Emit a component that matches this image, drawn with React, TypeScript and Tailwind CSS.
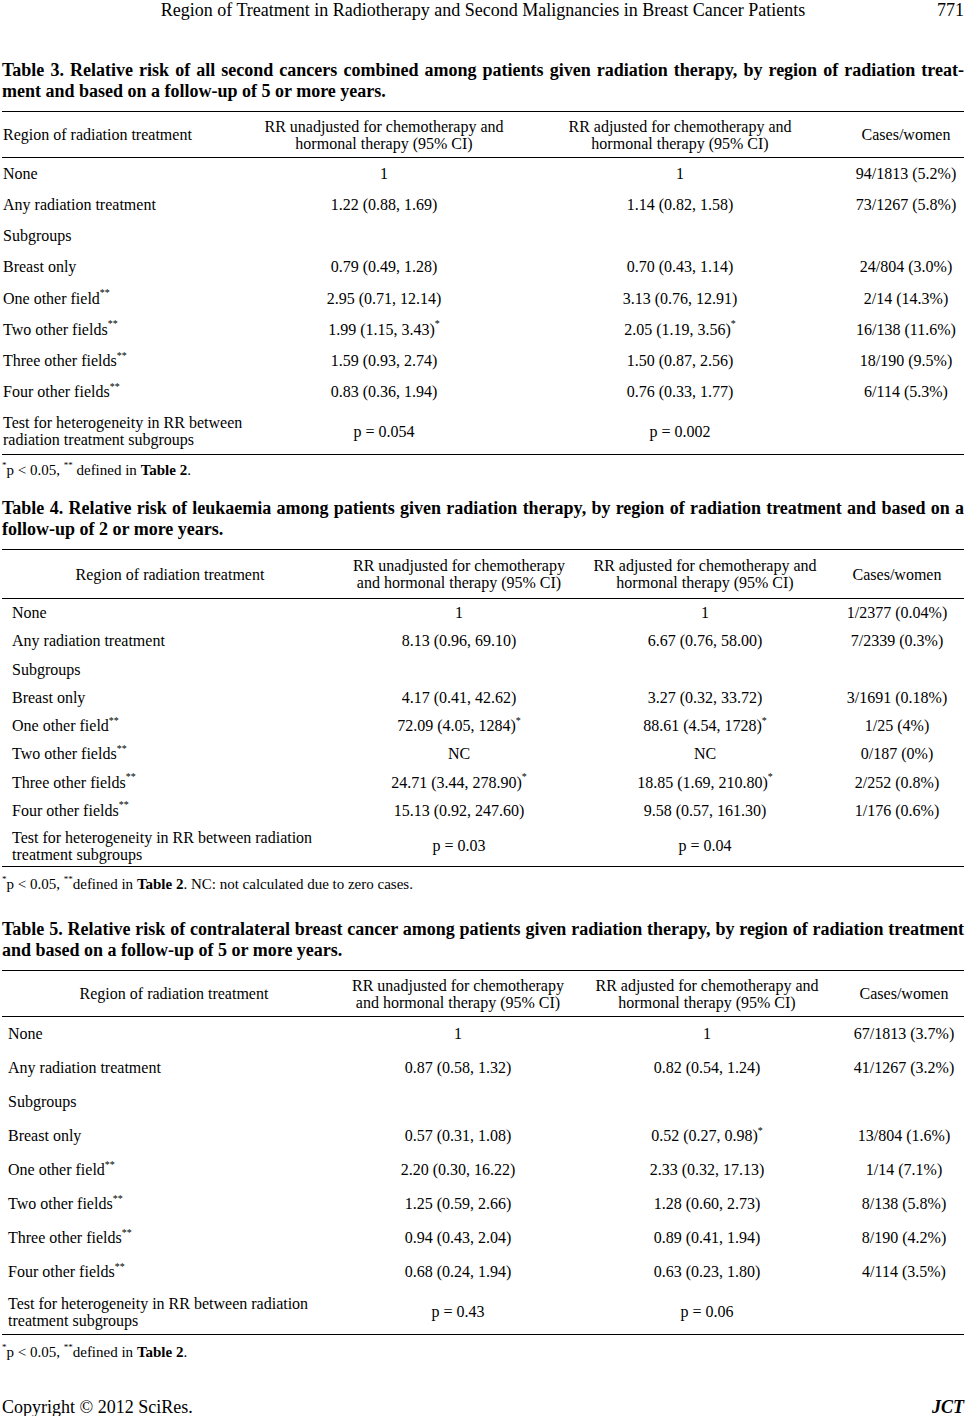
import * as React from "react";

type Row = {
    label: React.ReactNode;
    a: React.ReactNode;
    b: React.ReactNode;
    c: React.ReactNode;
};

interface TableProps {
    cols: string;
    headH: string;
    rowH: string;
    testH: string;
    headLeft: boolean;
    labelPad: string;
    colA: React.ReactNode;
    colB: React.ReactNode;
    rows: Row[];
    test: Row;
}

const St = () => <sup className="text-[10px] top-[-0.75em]">*</sup>;
const Dst = () => <sup className="text-[10px] top-[-0.75em]">**</sup>;

function Rule() {
    return <div className="h-px bg-black" />;
}

function DataTable(props: TableProps) {
    const { cols, headH, rowH, testH, headLeft, labelPad, colA, colB, rows, test } = props;
    return (
        <div>
            <Rule />
            <div className={`grid items-center leading-[17px] ${cols} ${headH}`}>
                <div className={headLeft ? "pl-px text-left" : "text-center"}>Region of radiation treatment</div>
                <div className="text-center">{colA}</div>
                <div className="text-center">{colB}</div>
                <div className="text-center">Cases/women</div>
            </div>
            <Rule />
            {rows.map((row, i) => (
                <div key={i} className={`grid items-center ${cols} ${rowH}`}>
                    <div className={`whitespace-nowrap ${labelPad}`}>{row.label}</div>
                    <div className="text-center whitespace-nowrap">{row.a}</div>
                    <div className="text-center whitespace-nowrap">{row.b}</div>
                    <div className="text-center whitespace-nowrap">{row.c}</div>
                </div>
            ))}
            <div className={`grid items-center leading-[17px] ${cols} ${testH}`}>
                <div className={labelPad}>{test.label}</div>
                <div className="text-center">{test.a}</div>
                <div className="text-center">{test.b}</div>
                <div className="text-center">{test.c}</div>
            </div>
            <Rule />
        </div>
    );
}

function Caption(props: { first: string; second: string }) {
    return (
        <div className="font-bold text-[18px] leading-[21px]">
            <div className="whitespace-nowrap text-justify [text-align-last:justify]">{props.first}</div>
            <div>{props.second}</div>
        </div>
    );
}

const table3: Row[] = [
    { label: "None", a: "1", b: "1", c: "94/1813 (5.2%)" },
    { label: "Any radiation treatment", a: "1.22 (0.88, 1.69)", b: "1.14 (0.82, 1.58)", c: "73/1267 (5.8%)" },
    { label: "Subgroups", a: "", b: "", c: "" },
    { label: "Breast only", a: "0.79 (0.49, 1.28)", b: "0.70 (0.43, 1.14)", c: "24/804 (3.0%)" },
    { label: <>One other field<Dst /></>, a: "2.95 (0.71, 12.14)", b: "3.13 (0.76, 12.91)", c: "2/14 (14.3%)" },
    { label: <>Two other fields<Dst /></>, a: <>1.99 (1.15, 3.43)<St /></>, b: <>2.05 (1.19, 3.56)<St /></>, c: "16/138 (11.6%)" },
    { label: <>Three other fields<Dst /></>, a: "1.59 (0.93, 2.74)", b: "1.50 (0.87, 2.56)", c: "18/190 (9.5%)" },
    { label: <>Four other fields<Dst /></>, a: "0.83 (0.36, 1.94)", b: "0.76 (0.33, 1.77)", c: "6/114 (5.3%)" },
];

const table4: Row[] = [
    { label: "None", a: "1", b: "1", c: "1/2377 (0.04%)" },
    { label: "Any radiation treatment", a: "8.13 (0.96, 69.10)", b: "6.67 (0.76, 58.00)", c: "7/2339 (0.3%)" },
    { label: "Subgroups", a: "", b: "", c: "" },
    { label: "Breast only", a: "4.17 (0.41, 42.62)", b: "3.27 (0.32, 33.72)", c: "3/1691 (0.18%)" },
    { label: <>One other field<Dst /></>, a: <>72.09 (4.05, 1284)<St /></>, b: <>88.61 (4.54, 1728)<St /></>, c: "1/25 (4%)" },
    { label: <>Two other fields<Dst /></>, a: "NC", b: "NC", c: "0/187 (0%)" },
    { label: <>Three other fields<Dst /></>, a: <>24.71 (3.44, 278.90)<St /></>, b: <>18.85 (1.69, 210.80)<St /></>, c: "2/252 (0.8%)" },
    { label: <>Four other fields<Dst /></>, a: "15.13 (0.92, 247.60)", b: "9.58 (0.57, 161.30)", c: "1/176 (0.6%)" },
];

const table5: Row[] = [
    { label: "None", a: "1", b: "1", c: "67/1813 (3.7%)" },
    { label: "Any radiation treatment", a: "0.87 (0.58, 1.32)", b: "0.82 (0.54, 1.24)", c: "41/1267 (3.2%)" },
    { label: "Subgroups", a: "", b: "", c: "" },
    { label: "Breast only", a: "0.57 (0.31, 1.08)", b: <>0.52 (0.27, 0.98)<St /></>, c: "13/804 (1.6%)" },
    { label: <>One other field<Dst /></>, a: "2.20 (0.30, 16.22)", b: "2.33 (0.32, 17.13)", c: "1/14 (7.1%)" },
    { label: <>Two other fields<Dst /></>, a: "1.25 (0.59, 2.66)", b: "1.28 (0.60, 2.73)", c: "8/138 (5.8%)" },
    { label: <>Three other fields<Dst /></>, a: "0.94 (0.43, 2.04)", b: "0.89 (0.41, 1.94)", c: "8/190 (4.2%)" },
    { label: <>Four other fields<Dst /></>, a: "0.68 (0.24, 1.94)", b: "0.63 (0.23, 1.80)", c: "4/114 (3.5%)" },
];

export default function App() {
    return (
        <div className="w-[966px] h-[1416px] bg-white text-black px-[2px] font-['Liberation_Serif','Times_New_Roman',serif] text-[16px] overflow-hidden">
            <div className="grid grid-cols-[1fr_auto_1fr] h-[20px] leading-[20px] text-[18px]">
                <div />
                <div>Region of Treatment in Radiotherapy and Second Malignancies in Breast Cancer Patients</div>
                <div className="justify-self-end">771</div>
            </div>

            <div className="mt-[40px]">
                <Caption
                    first="Table 3. Relative risk of all second cancers combined among patients given radiation therapy, by region of radiation treat-"
                    second="ment and based on a follow-up of 5 or more years."
                />
            </div>
            <div className="mt-[9px]">
                <DataTable
                    cols="grid-cols-[254px_256px_336px_116px]"
                    headH="h-[45px]"
                    rowH="h-[31.25px]"
                    testH="h-[46px]"
                    headLeft={true}
                    labelPad="pl-px"
                    colA={<>RR unadjusted for chemotherapy and<br />hormonal therapy (95% CI)</>}
                    colB={<>RR adjusted for chemotherapy and<br />hormonal therapy (95% CI)</>}
                    rows={table3}
                    test={{ label: <>Test for heterogeneity in RR between<br />radiation treatment subgroups</>, a: "p = 0.054", b: "p = 0.002", c: "" }}
                />
            </div>
            <div className="mt-[7px] text-[15px] leading-[17px]">
                <sup className="text-[9px] top-[-0.8em]">*</sup>p &lt; 0.05, <sup className="text-[9px] top-[-0.8em]">**</sup> defined in <b>Table 2</b>.
            </div>

            <div className="mt-[19px]">
                <Caption
                    first="Table 4. Relative risk of leukaemia among patients given radiation therapy, by region of radiation treatment and based on a"
                    second="follow-up of 2 or more years."
                />
            </div>
            <div className="mt-[9px]">
                <DataTable
                    cols="grid-cols-[336px_242px_250px_134px]"
                    headH="h-[48px]"
                    rowH="h-[28.25px]"
                    testH="h-[41px]"
                    headLeft={false}
                    labelPad="pl-[10px]"
                    colA={<>RR unadjusted for chemotherapy<br />and hormonal therapy (95% CI)</>}
                    colB={<>RR adjusted for chemotherapy and<br />hormonal therapy (95% CI)</>}
                    rows={table4}
                    test={{ label: <>Test for heterogeneity in RR between radiation<br />treatment subgroups</>, a: "p = 0.03", b: "p = 0.04", c: "" }}
                />
            </div>
            <div className="mt-[9px] text-[15px] leading-[17px]">
                <sup className="text-[9px] top-[-0.8em]">*</sup>p &lt; 0.05, <sup className="text-[9px] top-[-0.8em]">**</sup>defined in <b>Table 2</b>. NC: not calculated due to zero cases.
            </div>

            <div className="mt-[26px]">
                <Caption
                    first="Table 5. Relative risk of contralateral breast cancer among patients given radiation therapy, by region of radiation treatment"
                    second="and based on a follow-up of 5 or more years."
                />
            </div>
            <div className="mt-[9px]">
                <DataTable
                    cols="grid-cols-[344px_224px_274px_120px]"
                    headH="h-[45px]"
                    rowH="h-[34px]"
                    testH="h-[45px]"
                    headLeft={false}
                    labelPad="pl-[6px]"
                    colA={<>RR unadjusted for chemotherapy<br />and hormonal therapy (95% CI)</>}
                    colB={<>RR adjusted for chemotherapy and<br />hormonal therapy (95% CI)</>}
                    rows={table5}
                    test={{ label: <>Test for heterogeneity in RR between radiation<br />treatment subgroups</>, a: "p = 0.43", b: "p = 0.06", c: "" }}
                />
            </div>
            <div className="mt-[9px] text-[15px] leading-[17px]">
                <sup className="text-[9px] top-[-0.8em]">*</sup>p &lt; 0.05, <sup className="text-[9px] top-[-0.8em]">**</sup>defined in <b>Table 2</b>.
            </div>

            <div className="mt-[36px] flex justify-between items-center text-[18px] leading-[20px]">
                <span>Copyright © 2012 SciRes.</span>
                <span className="font-bold italic">JCT</span>
            </div>
        </div>
    );
}
